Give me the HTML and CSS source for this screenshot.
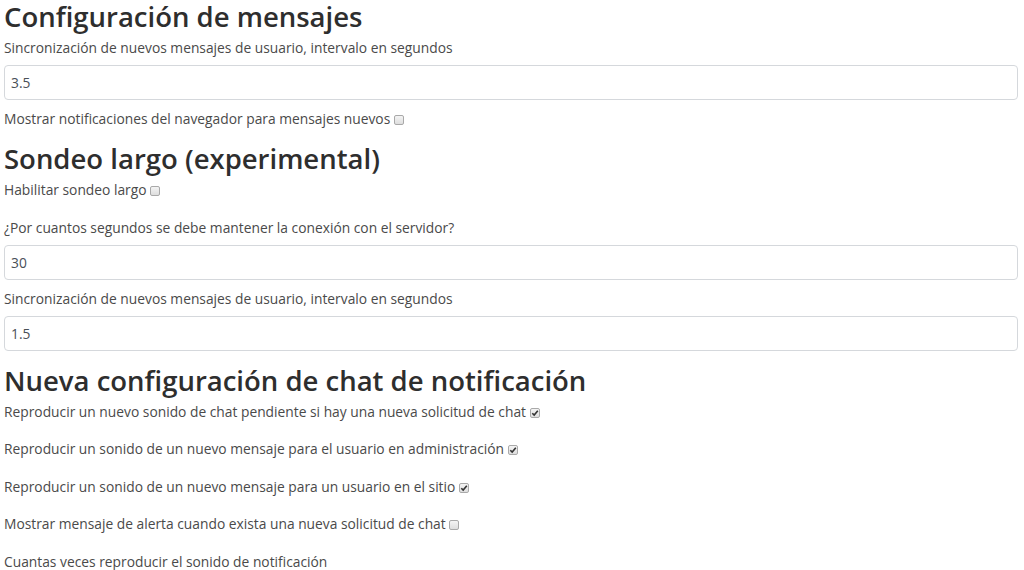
FILE: index.html
```html
<!DOCTYPE html>
<html lang="es">
<head>
    <meta charset="UTF-8">
    <title>Configuración de chat</title>
    <link rel="stylesheet" href="styles.css">
</head>
<body>
    <div class="settings">
        <div class="section">
            <h2 class="title">Configuración de mensajes</h2>
            <div class="field">
                <label for="syncMsg">Sincronización de nuevos mensajes de usuario, intervalo en segundos</label>
                <input type="text" id="syncMsg" class="form-control" value="3.5">
            </div>
            <label class="check">Mostrar notificaciones del navegador para mensajes nuevos <span class="box"></span></label>
        </div>

        <div class="section">
            <h2 class="title">Sondeo largo (experimental)</h2>
            <label class="check">Habilitar sondeo largo <span class="box"></span></label>
            <div class="field">
                <label for="pollTimeout">¿Por cuantos segundos se debe mantener la conexión con el servidor?</label>
                <input type="text" id="pollTimeout" class="form-control" value="30">
            </div>
            <div class="field">
                <label for="pollSync">Sincronización de nuevos mensajes de usuario, intervalo en segundos</label>
                <input type="text" id="pollSync" class="form-control" value="1.5">
            </div>
        </div>

        <div class="section">
            <h2 class="title">Nueva configuración de chat de notificación</h2>
            <label class="check">Reproducir un nuevo sonido de chat pendiente si hay una nueva solicitud de chat <span class="box checked"><svg viewBox="0 0 10 10"><path d="M2.3 5.2 L4.2 7.1 L7.8 2.8" /></svg></span></label>
            <label class="check">Reproducir un sonido de un nuevo mensaje para el usuario en administración <span class="box checked"><svg viewBox="0 0 10 10"><path d="M2.3 5.2 L4.2 7.1 L7.8 2.8" /></svg></span></label>
            <label class="check">Reproducir un sonido de un nuevo mensaje para un usuario en el sitio <span class="box checked"><svg viewBox="0 0 10 10"><path d="M2.3 5.2 L4.2 7.1 L7.8 2.8" /></svg></span></label>
            <label class="check">Mostrar mensaje de alerta cuando exista una nueva solicitud de chat <span class="box"></span></label>
            <label class="check">Cuantas veces reproducir el sonido de notificación</label>
        </div>
    </div>
</body>
</html>
```

FILE: styles.css
```css
body {
    margin: 0;
    font-family: 'Open Sans', 'Noto Sans', sans-serif;
    font-size: 13.8px;
    color: #4a4a4a;
    background: #fff;
}
.settings {
    padding: 0 6px 0 4px;
}
.section + .section {
    margin-top: 13px;
}
.title {
    margin: 0 0 4px;
    font-size: 27.5px;
    line-height: 34px;
    font-weight: 600;
    color: #2e2e2e;
}
.field {
    margin-bottom: 9px;
}
.field:last-child,
.check:last-child {
    margin-bottom: 0;
}
.field label {
    display: block;
    line-height: 20px;
    margin-bottom: 7px;
}
.form-control {
    display: block;
    width: 100%;
    box-sizing: border-box;
    height: 35px;
    padding: 6px 6px;
    font-family: inherit;
    font-size: 13.8px;
    color: #495057;
    background: #fff;
    border: 1px solid #d5d8dc;
    border-radius: 4px;
}
.check {
    display: block;
    line-height: 20px;
    margin-bottom: 17.5px;
}
.box {
    display: inline-block;
    width: 10px;
    height: 10px;
    box-sizing: border-box;
    border: 1px solid #a9a9a9;
    border-radius: 2px;
    background: linear-gradient(#f4f4f4, #dedede);
    vertical-align: -1px;
    position: relative;
}
.box svg {
    position: absolute;
    left: -1px;
    top: -1px;
    width: 10px;
    height: 10px;
}
.box svg path {
    fill: none;
    stroke: #333;
    stroke-width: 1.6;
}
```
